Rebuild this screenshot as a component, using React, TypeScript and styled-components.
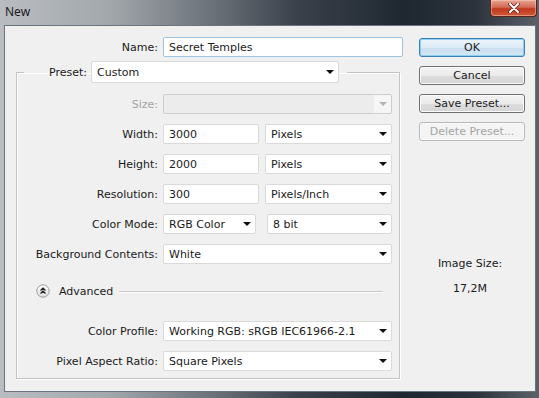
import React from "react";
import styled, { createGlobalStyle } from "styled-components";

const GlobalStyle = createGlobalStyle`
  html, body {
    margin: 0;
    padding: 0;
    background: #1d242d;
  }
  body {
    font-family: "DejaVu Sans", Verdana, sans-serif;
  }
`;

const Window = styled.div`
  width: 539px;
  height: 398px;
  display: flex;
  flex-direction: column;
  overflow: hidden;
  background: linear-gradient(
    90deg,
    #b9bdc1 0%,
    #a3a8ad 20%,
    #6a7078 40%,
    #3a414a 55%,
    #1f2730 75%,
    #2b323b 88%,
    #5d6269 100%
  );
`;

const TitleBar = styled.div`
  height: 25px;
  flex: none;
  display: flex;
  justify-content: space-between;
  align-items: flex-start;
  padding-left: 5px;
`;

const Title = styled.span`
  font-family: "Noto Sans", "DejaVu Sans", sans-serif;
  font-size: 12px;
  line-height: 24px;
  color: #1b1b1b;
`;

const CloseButton = styled.div`
  width: 47px;
  height: 17px;
  margin-right: 2px;
  box-sizing: border-box;
  border: 1px solid #5b2418;
  border-top: none;
  border-radius: 0 0 4px 4px;
  background: linear-gradient(180deg, #e6a593 0%, #d46a55 45%, #c0391f 55%, #d0593a 100%);
  box-shadow: inset 0 0 0 1px rgba(255, 220, 200, 0.45);
  display: flex;
  align-items: center;
  justify-content: center;
`;

const Client = styled.div`
  flex: 1;
  margin: 0 3px 6px 4px;
  background: #f0f0f0;
  border: 1px solid #6c737c;
  display: flex;
  gap: 16px;
  padding-top: 11px;
  color: #1a1a1a;
  font-size: 11px;
`;

const LeftCol = styled.div`
  width: 398px;
  display: flex;
  flex-direction: column;
`;

const Row = styled.div<{ $label: number; $mt?: number }>`
  display: grid;
  grid-template-columns: ${(p) => p.$label}px 1fr;
  column-gap: 5px;
  align-items: center;
  height: 20px;
  margin-top: ${(p) => p.$mt ?? 10}px;
`;

const Label = styled.span<{ $disabled?: boolean }>`
  text-align: right;
  white-space: nowrap;
  color: ${(p) => (p.$disabled ? "#a3a3a3" : "#1a1a1a")};
`;

const Fields = styled.div<{ $gap?: number }>`
  display: flex;
  gap: ${(p) => p.$gap ?? 6}px;
  width: 229px;
`;

const TextField = styled.div<{ $w: number; $focus?: boolean }>`
  width: ${(p) => p.$w}px;
  height: 20px;
  box-sizing: border-box;
  background: #fff;
  border: 1px solid ${(p) => (p.$focus ? "#9cc3df" : "#dadada")};
  border-radius: 2px;
  padding: 0 5px;
  display: flex;
  align-items: center;
  white-space: nowrap;
`;

const SelectBox = styled.div<{ $w: number; $disabled?: boolean; $h?: number }>`
  width: ${(p) => p.$w}px;
  height: ${(p) => p.$h ?? 20}px;
  box-sizing: border-box;
  background: ${(p) => (p.$disabled ? "#ececec" : "#fff")};
  border: 1px solid ${(p) => (p.$disabled ? "#cdcdcd" : "#dadada")};
  border-radius: 2px;
  padding-left: 5px;
  display: flex;
  align-items: center;
  white-space: nowrap;
  overflow: hidden;
`;

const SelectText = styled.span`
  flex: 1;
  overflow: hidden;
`;

const ArrowArea = styled.div<{ $disabled?: boolean }>`
  width: 17px;
  align-self: stretch;
  display: flex;
  align-items: center;
  justify-content: center;
  background: ${(p) => (p.$disabled ? "#f6f6f6" : "transparent")};
`;

const Arrow = styled.span<{ $disabled?: boolean }>`
  width: 0;
  height: 0;
  border-left: 4px solid transparent;
  border-right: 4px solid transparent;
  border-top: 4px solid ${(p) => (p.$disabled ? "#b4b4b4" : "#111")};
`;

const GroupBox = styled.fieldset`
  margin: 4px 0 0 11px;
  padding: 11px 0 7px 0;
  width: 384px;
  box-sizing: border-box;
  border: 1px solid #c4c4c4;
  box-shadow: inset 1px 1px 0 #fff, 1px 1px 0 #fff;
  min-inline-size: 0;
`;

const Legend = styled.legend`
  margin-left: 7px;
  padding: 0 8px 0 0;
  height: 22px;
  display: flex;
  align-items: center;
  gap: 4px;
`;

const LegendLabel = styled.span`
  width: 63px;
  text-align: right;
`;

const AdvancedRow = styled.div`
  display: flex;
  align-items: center;
  height: 14px;
  margin: 20px 16px 0 19px;
  gap: 9px;
`;

const Rule = styled.div`
  flex: 1;
  height: 1px;
  background: #c9c9c9;
  box-shadow: 0 1px 0 #fff;
  margin-left: -3px;
`;

const RightCol = styled.div`
  width: 106px;
  display: flex;
  flex-direction: column;
  padding-top: 1px;
`;

const Button = styled.div<{ $variant?: "default" | "normal" | "disabled" }>`
  height: 19px;
  box-sizing: border-box;
  margin-bottom: 9px;
  border-radius: 3px;
  display: flex;
  align-items: center;
  justify-content: center;
  font-size: 11px;
  border: 1px solid
    ${(p) =>
      p.$variant === "default" ? "#3c7fb1" : p.$variant === "disabled" ? "#b5b9bc" : "#707070"};
  color: ${(p) => (p.$variant === "disabled" ? "#a5a5a5" : "#1a1a1a")};
  background: ${(p) =>
    p.$variant === "default"
      ? "linear-gradient(180deg, #eaf4fb 0%, #dcebf6 50%, #c9def0 51%, #d5e7f4 100%)"
      : p.$variant === "disabled"
      ? "#f4f4f4"
      : "linear-gradient(180deg, #f3f3f3 0%, #ebebeb 50%, #dddddd 51%, #d6d6d6 100%)"};
  box-shadow: ${(p) =>
    p.$variant === "default" ? "inset 0 0 0 1px #8fd0f2" : "inset 0 0 0 1px #fbfbfb"};
`;

const InfoBlock = styled.div`
  margin-top: 107px;
  display: flex;
  flex-direction: column;
  align-items: center;
  gap: 12px;
  padding-right: 4px;
`;

const Select = ({
  w,
  value,
  disabled,
  h,
}: {
  w: number;
  value?: string;
  disabled?: boolean;
  h?: number;
}) => (
  <SelectBox $w={w} $disabled={disabled} $h={h}>
    <SelectText>{value}</SelectText>
    <ArrowArea $disabled={disabled}>
      <Arrow $disabled={disabled} />
    </ArrowArea>
  </SelectBox>
);

const AdvancedIcon = () => (
  <svg width="14" height="14" viewBox="0 0 14 14">
    <defs>
      <linearGradient id="adv" x1="0" y1="0" x2="0" y2="1">
        <stop offset="0" stopColor="#ffffff" />
        <stop offset="1" stopColor="#dedede" />
      </linearGradient>
    </defs>
    <circle cx="7" cy="7" r="6.2" fill="url(#adv)" stroke="#9a9a9a" strokeWidth="1" />
    <path d="M4.5 6.5 L7 4.2 L9.5 6.5 M4.5 9.5 L7 7.2 L9.5 9.5" fill="none" stroke="#222" strokeWidth="1.3" />
  </svg>
);

const CloseIcon = () => (
  <svg width="12" height="10" viewBox="0 0 12 10">
    <path d="M2 1 L10 9 M10 1 L2 9" stroke="#5a1c12" strokeWidth="3.4" strokeLinecap="round" />
    <path d="M2 1 L10 9 M10 1 L2 9" stroke="#ffffff" strokeWidth="2" strokeLinecap="round" />
  </svg>
);

const App = () => {
  return (
    <>
      <GlobalStyle />
      <Window>
        <TitleBar>
          <Title>New</Title>
          <CloseButton>
            <CloseIcon />
          </CloseButton>
        </TitleBar>
        <Client>
          <LeftCol>
            <Row $label={153} $mt={0}>
              <Label>Name:</Label>
              <TextField $w={240} $focus>
                Secret Temples
              </TextField>
            </Row>
            <GroupBox>
              <Legend>
                <LegendLabel>Preset:</LegendLabel>
                <Select w={248} h={22} value="Custom" />
              </Legend>
              <Row $label={141} $mt={0}>
                <Label $disabled>Size:</Label>
                <Select w={229} disabled />
              </Row>
              <Row $label={141}>
                <Label>Width:</Label>
                <Fields>
                  <TextField $w={96}>3000</TextField>
                  <Select w={127} value="Pixels" />
                </Fields>
              </Row>
              <Row $label={141}>
                <Label>Height:</Label>
                <Fields>
                  <TextField $w={96}>2000</TextField>
                  <Select w={127} value="Pixels" />
                </Fields>
              </Row>
              <Row $label={141}>
                <Label>Resolution:</Label>
                <Fields>
                  <TextField $w={96}>300</TextField>
                  <Select w={127} value="Pixels/Inch" />
                </Fields>
              </Row>
              <Row $label={141}>
                <Label>Color Mode:</Label>
                <Fields $gap={11}>
                  <Select w={93} value="RGB Color" />
                  <Select w={125} value="8 bit" />
                </Fields>
              </Row>
              <Row $label={141}>
                <Label>Background Contents:</Label>
                <Select w={229} value="White" />
              </Row>
              <AdvancedRow>
                <AdvancedIcon />
                <span>Advanced</span>
                <Rule />
              </AdvancedRow>
              <Row $label={141} $mt={23}>
                <Label>Color Profile:</Label>
                <Select w={229} value="Working RGB:  sRGB IEC61966-2.1" />
              </Row>
              <Row $label={141}>
                <Label>Pixel Aspect Ratio:</Label>
                <Select w={229} value="Square Pixels" />
              </Row>
            </GroupBox>
          </LeftCol>
          <RightCol>
            <Button $variant="default">OK</Button>
            <Button>Cancel</Button>
            <Button>Save Preset...</Button>
            <Button $variant="disabled">Delete Preset...</Button>
            <InfoBlock>
              <span>Image Size:</span>
              <span>17,2M</span>
            </InfoBlock>
          </RightCol>
        </Client>
      </Window>
    </>
  );
};

export default App;
